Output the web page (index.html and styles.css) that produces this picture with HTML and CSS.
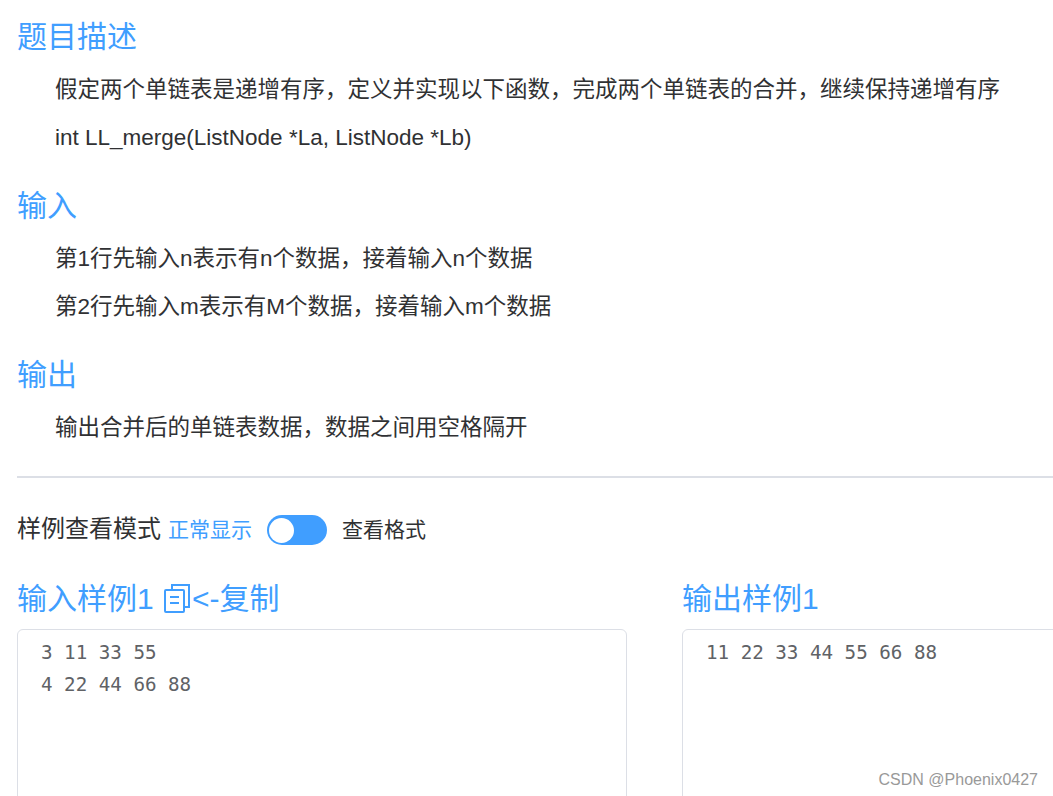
FILE: index.html
```html
<!DOCTYPE html>
<html lang="zh">
<head>
<meta charset="utf-8">
<title>题目描述</title>
<link rel="stylesheet" href="styles.css">
</head>
<body>
<main class="page">
  <section class="block">
    <h3 class="title">题目描述</h3>
    <div class="desc">
      <p>假定两个单链表是递增有序，定义并实现以下函数，完成两个单链表的合并，继续保持递增有序</p>
      <p>int LL_merge(ListNode *La, ListNode *Lb)</p>
    </div>
  </section>
  <section class="block">
    <h3 class="title">输入</h3>
    <div class="desc">
      <p>第1行先输入n表示有n个数据，接着输入n个数据</p>
      <p>第2行先输入m表示有M个数据，接着输入m个数据</p>
    </div>
  </section>
  <section class="block">
    <h3 class="title">输出</h3>
    <div class="desc">
      <p>输出合并后的单链表数据，数据之间用空格隔开</p>
    </div>
  </section>
  <hr class="rule">
  <div class="mode">
    <span class="mode-label">样例查看模式</span>
    <span class="mode-on">正常显示</span>
    <span class="switch"><span class="knob"></span></span>
    <span class="mode-off">查看格式</span>
  </div>
  <div class="samples">
    <div class="sample">
      <h3 class="sample-title">输入样例1 <svg class="copy" viewBox="0 0 30 30" fill="none" stroke="currentColor" stroke-width="2"><rect x="3" y="7" width="19" height="22" rx="1"/><path d="M10 7V2H27V24H23"/><path d="M8 14H17M8 20H17"/></svg>&lt;-复制</h3>
      <pre class="code">3 11 33 55
4 22 44 66 88</pre>
    </div>
    <div class="sample">
      <h3 class="sample-title">输出样例1</h3>
      <pre class="code">11 22 33 44 55 66 88</pre>
    </div>
  </div>
</main>
<div class="mark">CSDN @Phoenix0427</div>
</body>
</html>
```
FILE: styles.css
```css
html, body {
  margin: 0;
  height: 796px;
  overflow: hidden;
  background: #fff;
}
body {
  font-family: "Liberation Sans", "Noto Sans CJK SC", sans-serif;
  color: #303133;
  position: relative;
}
.page {
  box-sizing: border-box;
  height: 796px;
  overflow: hidden;
  padding: 16px 0 0 17px;
}
.block { margin-bottom: 23px; }
.title {
  margin: 0;
  font-size: 30px;
  line-height: 42px;
  font-weight: 400;
  color: #409eff;
}
.desc { padding: 8px 0 0 38px; }
.desc p {
  margin: 0;
  font-size: 22.5px;
  line-height: 48px;
  white-space: nowrap;
}
.rule {
  border: 0;
  border-top: 2px solid #dcdfe6;
  margin: 24px 0 0;
}
.mode {
  display: flex;
  align-items: center;
  height: 30px;
  margin-top: 37px;
}
.mode-label { font-size: 24px; margin-bottom: 7px; }
.mode-on { font-size: 21px; color: #409eff; margin-left: 7px; margin-bottom: 4px; }
.mode-off { font-size: 21px; margin-left: 15px; margin-bottom: 4px; }
.switch {
  width: 60px;
  height: 30px;
  border-radius: 15px;
  background: #409eff;
  margin-left: 15px;
  display: flex;
  align-items: center;
  padding-left: 2px;
  box-sizing: border-box;
}
.knob {
  width: 25px;
  height: 25px;
  border-radius: 50%;
  background: #fff;
}
.samples {
  display: flex;
  gap: 55px;
  margin-top: 31px;
  overflow: hidden;
}
.sample { width: 610px; flex: none; }
.sample-title {
  margin: 0 0 8px;
  font-size: 30px;
  line-height: 45px;
  font-weight: 400;
  color: #409eff;
  white-space: nowrap;
}
.copy { width: 30px; height: 30px; vertical-align: -4px; }
.code {
  margin: 0;
  box-sizing: border-box;
  height: 300px;
  padding: 7px 23px;
  border: 1px solid #dcdfe6;
  border-radius: 6px;
  font-family: "DejaVu Sans Mono", monospace;
  font-size: 19.2px;
  line-height: 32px;
  color: #606266;
}
.mark {
  position: absolute;
  right: 15px;
  top: 771px;
  font-size: 16px;
  line-height: 18px;
  color: #999;
}
```
